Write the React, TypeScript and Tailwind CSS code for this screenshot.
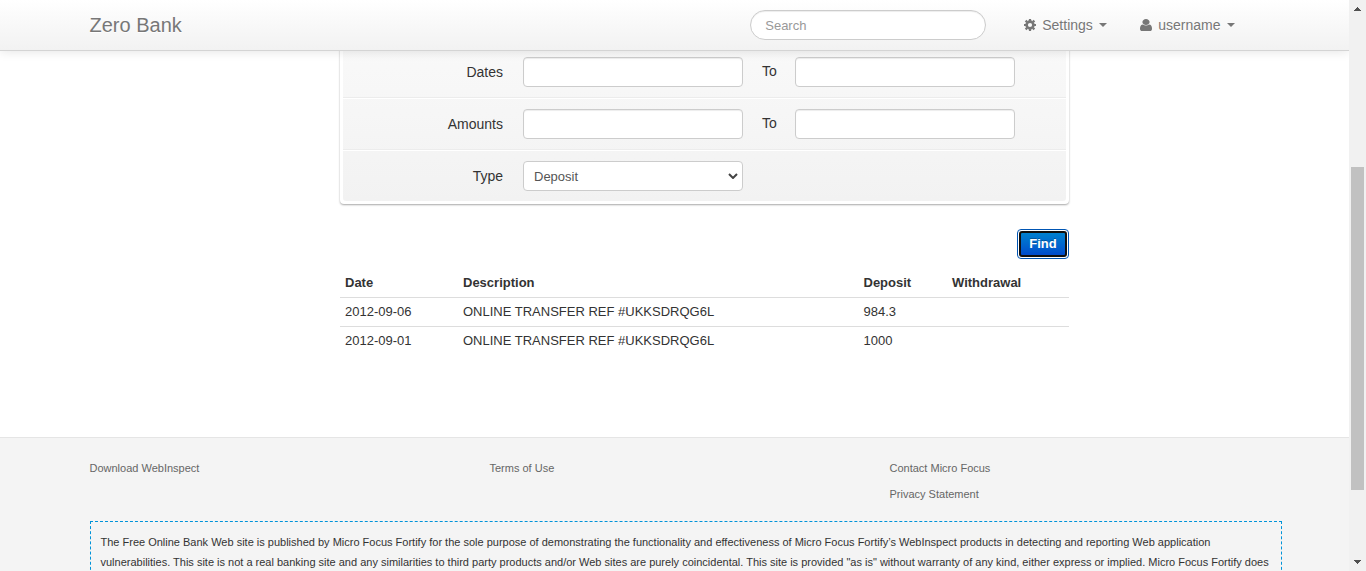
import React from "react";

const transactions = [
  { date: "2012-09-06", description: "ONLINE TRANSFER REF #UKKSDRQG6L", deposit: "984.3" },
  { date: "2012-09-01", description: "ONLINE TRANSFER REF #UKKSDRQG6L", deposit: "1000" },
];

const inputClass =
  "block h-[30px] w-[220px] rounded-[4px] border border-[#ccc] bg-white px-[6px] text-[14px] text-[#555] shadow-[inset_0_1px_1px_rgba(0,0,0,0.075)] outline-none";

function CogIcon() {
  return (
    <svg className="h-[12px] w-[12px]" viewBox="0 0 12 12" fill="none" stroke="currentColor">
      <circle cx="6" cy="6" r="3.4" strokeWidth="2.6" />
      <path
        d="M6 0v2M6 10v2M0 6h2M10 6h2M1.6 1.6l1.5 1.5M8.9 8.9l1.5 1.5M10.4 1.6L8.9 3.1M3.1 8.9l-1.5 1.5"
        strokeWidth="2.2"
      />
    </svg>
  );
}

function UserIcon() {
  return (
    <svg className="h-[12px] w-[12px]" viewBox="0 0 1280 1536" preserveAspectRatio="none" fill="currentColor">
      <path d="M1280 1271q0 109-62.5 187t-150.5 78h-854q-88 0-150.5-78t-62.5-187q0-85 8.5-160.5t31.5-152 58.5-131 94-89 134.5-34.5q131 128 313 128t313-128q76 0 134.5 34.5t94 89 58.5 131 31.5 152 8.5 160.5zm-256-887q0 159-112.5 271.5t-271.5 112.5-271.5-112.5-112.5-271.5 112.5-271.5 271.5-112.5 271.5 112.5 112.5 271.5z" />
    </svg>
  );
}

function Caret() {
  return (
    <svg className="h-[4px] w-[8px]" viewBox="0 0 8 4" fill="currentColor">
      <path d="M0 0h8L4 4z" />
    </svg>
  );
}

function Navbar() {
  return (
    <header className="relative z-10 h-[51px] shrink-0 border-b border-[#d4d4d4] bg-linear-to-b from-white to-[#f2f2f2] shadow-[0_1px_10px_rgba(0,0,0,0.1)]">
      <div className="ml-[89.5px] flex h-[50px] w-[1170px] items-center text-[#777] [text-shadow:0_1px_0_#fff]">
        <a className="text-[20px] leading-[20px]">Zero Bank</a>
        <input
          placeholder="Search"
          className="ml-auto h-[30px] w-[236px] rounded-[15px] border border-[#ccc] bg-white px-[14px] text-[13px] shadow-[inset_0_1px_1px_rgba(0,0,0,0.075)] outline-none placeholder:text-[#999]"
        />
        <a className="ml-[38px] flex w-[116px] items-center text-[14px] leading-[20px]">
          <CogIcon />
          <span className="mr-[6px] ml-[6px]">Settings</span>
          <Caret />
        </a>
        <a className="mr-[25px] flex items-center text-[14px] leading-[20px]">
          <UserIcon />
          <span className="mr-[6px] ml-[6px]">username</span>
          <Caret />
        </a>
      </div>
    </header>
  );
}

function FieldRow({ label, children, last = false }: { label: string; children: React.ReactNode; last?: boolean }) {
  return (
    <div
      className={
        last
          ? "flex h-[51px] items-start border-t border-white pt-[10px]"
          : "flex h-[52px] items-start border-t border-b border-t-white border-b-[#ececec] pt-[10px]"
      }
    >
      <label className="mr-[20px] w-[160px] pt-[5px] text-right text-[14px] leading-[20px]">{label}</label>
      {children}
    </div>
  );
}

function RangeFields() {
  return (
    <>
      <input className={inputClass} />
      <span className="w-[52px] pt-[4px] pl-[19px] text-[14px] leading-[20px]">To</span>
      <input className={inputClass} />
    </>
  );
}

function SearchForm() {
  return (
    <form className="rounded-[4px] bg-white px-[3px] pb-[3px] shadow-[0_1px_2px_rgba(0,0,0,0.35)]">
      <div className="h-[155px] rounded-b-[3px] bg-linear-to-b from-[#f9f9f9] to-[#f2f2f2]">
        <FieldRow label="Dates">
          <RangeFields />
        </FieldRow>
        <FieldRow label="Amounts">
          <RangeFields />
        </FieldRow>
        <FieldRow label="Type" last>
          <div className="flex h-[30px] w-[220px] items-center justify-between rounded-[4px] border border-[#ccc] bg-white pr-[4px] pl-[10px] text-[13px] text-[#555]">
            <span className="pt-px">Deposit</span>
            <svg className="h-[6px] w-[10px]" viewBox="0 0 10 6" fill="none" stroke="#444" strokeWidth="2">
              <path d="M1 1l4 4 4-4" />
            </svg>
          </div>
        </FieldRow>
      </div>
    </form>
  );
}

function Transactions() {
  return (
    <table className="mt-[9px] w-full table-fixed text-left text-[13px] leading-[20px]">
      <colgroup>
        <col className="w-[118px]" />
        <col className="w-[400.5px]" />
        <col className="w-[88.5px]" />
        <col />
      </colgroup>
      <thead>
        <tr className="h-[29px]">
          <th className="px-[5px] pt-[5px] pb-[3px] font-bold">Date</th>
          <th className="px-[5px] pt-[5px] pb-[3px] font-bold">Description</th>
          <th className="px-[5px] pt-[5px] pb-[3px] font-bold">Deposit</th>
          <th className="px-[5px] pt-[5px] pb-[3px] font-bold">Withdrawal</th>
        </tr>
      </thead>
      <tbody>
        {transactions.map((t) => (
          <tr key={t.date} className="h-[29px] border-t border-[#ddd]">
            <td className="px-[5px] py-[4px]">{t.date}</td>
            <td className="px-[5px] py-[4px]">{t.description}</td>
            <td className="px-[5px] py-[4px]">{t.deposit}</td>
            <td />
          </tr>
        ))}
      </tbody>
    </table>
  );
}

function Footer() {
  return (
    <footer className="h-[200px] border-t border-[#e5e5e5] bg-[#f4f4f4] pt-[17px] pl-[89.5px] text-[11px]">
      <div className="flex h-[66px] w-[1200px] leading-[26px] text-[#666]">
        <div className="w-[400px]">Download WebInspect</div>
        <div className="w-[400px]">Terms of Use</div>
        <div className="w-[400px]">
          <div>Contact Micro Focus</div>
          <div>Privacy Statement</div>
        </div>
      </div>
      <div className="h-[110px] w-[1192px] border border-dashed border-[#0093d9] p-[10px] leading-[20px] whitespace-nowrap text-[#333]">
        <p>
          The Free Online Bank Web site is published by Micro Focus Fortify for the sole purpose of demonstrating the
          functionality and effectiveness of Micro Focus Fortify’s WebInspect products in detecting and reporting Web
          application
          <br />
          vulnerabilities. This site is not a real banking site and any similarities to third party products and/or Web
          sites are purely coincidental. This site is provided "as is" without warranty of any kind, either express or
          implied. Micro Focus Fortify does
        </p>
      </div>
    </footer>
  );
}

function Scrollbar() {
  return (
    <div className="flex h-full w-[17px] flex-col items-center bg-[#f1f1f1]">
      <svg className="mt-[7px] h-[4px] w-[7px]" viewBox="0 0 7 4" fill="#505050" shapeRendering="crispEdges">
        <path d="M3 0h1v1h1v1h1v1h1v1H0V3h1V2h1V1h1z" />
      </svg>
      <div className="mt-[156px] h-[323px] w-[13px] bg-[#c1c1c1]" />
      <svg className="mt-auto mb-[7px] h-[4px] w-[7px]" viewBox="0 0 7 4" fill="#505050" shapeRendering="crispEdges">
        <path d="M0 0h7v1H6v1H5v1H4v1H3V3H2V2H1V1H0z" />
      </svg>
    </div>
  );
}

export default function App() {
  return (
    <div className="flex h-[571px] w-[1366px] overflow-hidden bg-white font-['Liberation_Sans',Arial,sans-serif] text-[#333]">
      <div className="flex h-full w-[1349px] flex-col overflow-hidden">
        <Navbar />
        <main className="-mt-[5px] ml-[340px] h-[391px] w-[729px] shrink-0">
          <SearchForm />
          <div className="mt-[25px] flex justify-end">
            <button className="h-[30px] w-[52px] rounded-[4px] border border-[#0055b3] bg-white p-px">
              <span className="flex h-[26px] items-center justify-center rounded-[3px] border-2 border-[#101010] bg-linear-to-b from-[#0081cf] to-[#004bcc] text-[13px] leading-[20px] font-bold text-white [text-shadow:0_-1px_0_rgba(0,0,0,0.25)]">
                Find
              </span>
            </button>
          </div>
          <Transactions />
        </main>
        <Footer />
      </div>
      <Scrollbar />
    </div>
  );
}
